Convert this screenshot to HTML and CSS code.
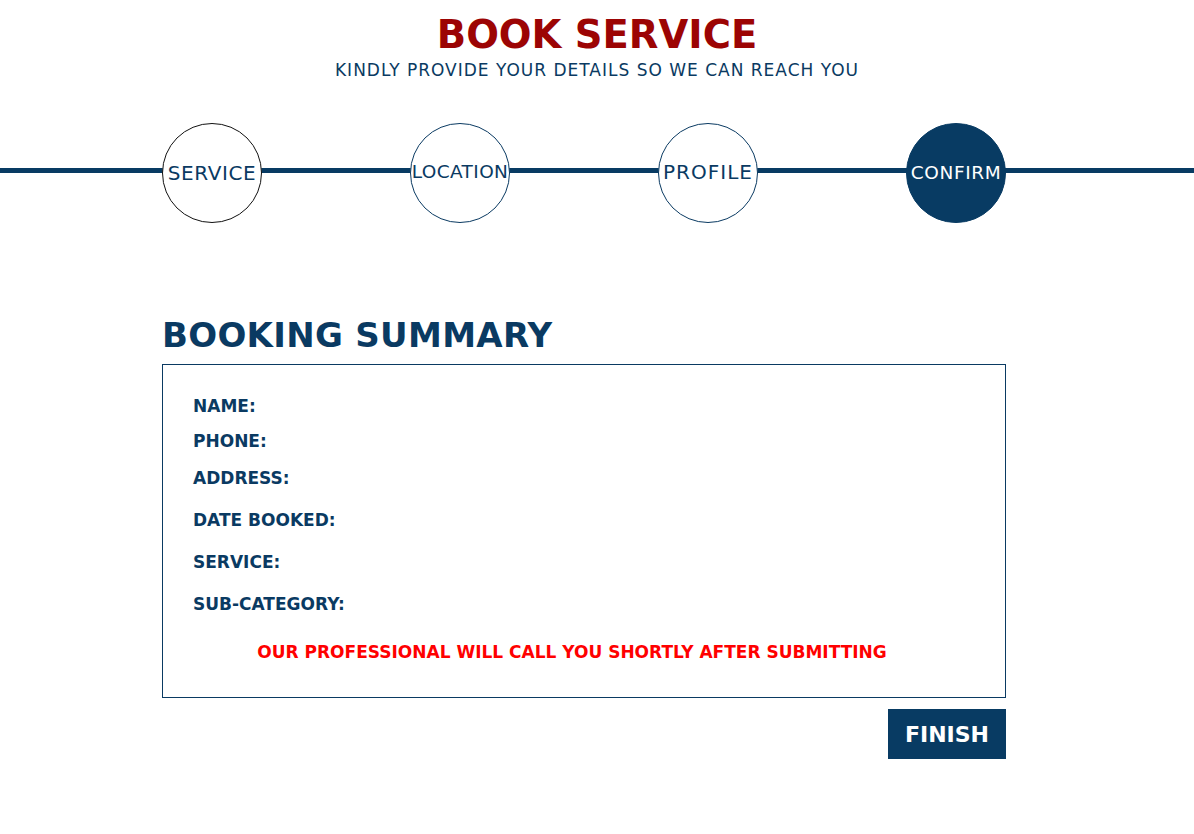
FILE: index.html
```html
<!DOCTYPE html>
<html lang="en">
<head>
<meta charset="utf-8">
<title>Book Service</title>
<link rel="stylesheet" href="styles.css">
</head>
<body>
<header class="page-head">
  <h1 class="title">BOOK SERVICE</h1>
  <p class="subtitle">KINDLY PROVIDE YOUR DETAILS SO WE CAN REACH YOU</p>
</header>

<nav class="stepper">
  <div class="steps">
    <div class="step step-first"><span class="lbl lbl-service">SERVICE</span></div>
    <div class="step"><span class="lbl lbl-location">LOCATION</span></div>
    <div class="step"><span class="lbl lbl-profile">PROFILE</span></div>
    <div class="step step-active"><span class="lbl lbl-confirm">CONFIRM</span></div>
  </div>
</nav>

<main class="summary">
  <h2 class="summary-title">BOOKING SUMMARY</h2>
  <section class="summary-box">
    <p class="field f-name">NAME:</p>
    <p class="field f-phone">PHONE:</p>
    <p class="field">ADDRESS:</p>
    <p class="field">DATE BOOKED:</p>
    <p class="field">SERVICE:</p>
    <p class="field f-last">SUB-CATEGORY:</p>
    <p class="notice">OUR PROFESSIONAL WILL CALL YOU SHORTLY AFTER SUBMITTING</p>
  </section>
  <div class="actions">
    <button class="finish" type="button">FINISH</button>
  </div>
</main>
</body>
</html>
```
FILE: styles.css
```css
* { box-sizing: border-box; }

body {
  margin: 0;
  background: #ffffff;
  font-family: "DejaVu Sans", "Open Sans", sans-serif;
  color: #0a3a62;
}

.page-head {
  text-align: center;
  padding-top: 13px;
}

.title {
  margin: 0;
  font-size: 38.5px;
  line-height: 44px;
  font-weight: 700;
  color: #9c0404;
}

.subtitle {
  margin: 3px 0 0;
  font-size: 17px;
  line-height: 20px;
  font-weight: 400;
  letter-spacing: 1px;
  color: #0a3a62;
}

.stepper {
  margin-top: 43px;
  height: 100px;
  background: linear-gradient(#083b63, #083b63) 0 45px / 100% 5px no-repeat;
}

.steps {
  width: 844px;
  height: 100px;
  margin-left: 162px;
  display: flex;
  justify-content: space-between;
  align-items: center;
}

.step {
  width: 100px;
  height: 100px;
  border-radius: 50%;
  border: 1px solid #0a3a62;
  background: #ffffff;
  display: flex;
  align-items: center;
  justify-content: center;
  color: #0a3a62;
}

.step-first { border-color: #111111; }

.step-active {
  background: #083b63;
  border-color: #083b63;
  color: #ffffff;
}

.lbl { font-weight: 400; white-space: nowrap; }
.lbl-service { font-size: 20px; margin-top: -1px; letter-spacing: 0.6px; }
.lbl-location { font-size: 18.5px; margin-top: -3px; letter-spacing: 0.4px; }
.lbl-profile { font-size: 20px; margin-top: -3px; letter-spacing: 1px; }
.lbl-confirm { font-size: 18.5px; margin-top: -2px; letter-spacing: 0.6px; }

.summary {
  width: 844px;
  margin-left: 162px;
  padding-top: 92px;
}

.summary-title {
  margin: 0 0 9px;
  font-size: 34px;
  line-height: 40px;
  font-weight: 700;
  letter-spacing: 0.3px;
  color: #0a3a62;
}

.summary-box {
  border: 1px solid #0a3a62;
  padding: 31px 30px 35px;
}

.field {
  margin: 0 0 22px;
  font-size: 17px;
  line-height: 20px;
  font-weight: 700;
  color: #0a3a62;
}
.field.f-name { margin-bottom: 15px; }
.field.f-phone { margin-bottom: 17px; }
.field.f-last { margin-bottom: 28px; }

.notice {
  margin: 0;
  padding-right: 24px;
  text-align: center;
  font-size: 17px;
  line-height: 20px;
  font-weight: 700;
  color: #ff0000;
}

.actions {
  display: flex;
  justify-content: flex-end;
  margin-top: 11px;
}

.finish {
  width: 118px;
  height: 50px;
  border: 0;
  background: #083b63;
  color: #ffffff;
  font-family: inherit;
  font-size: 22px;
  font-weight: 700;
  padding: 0;
}
```
